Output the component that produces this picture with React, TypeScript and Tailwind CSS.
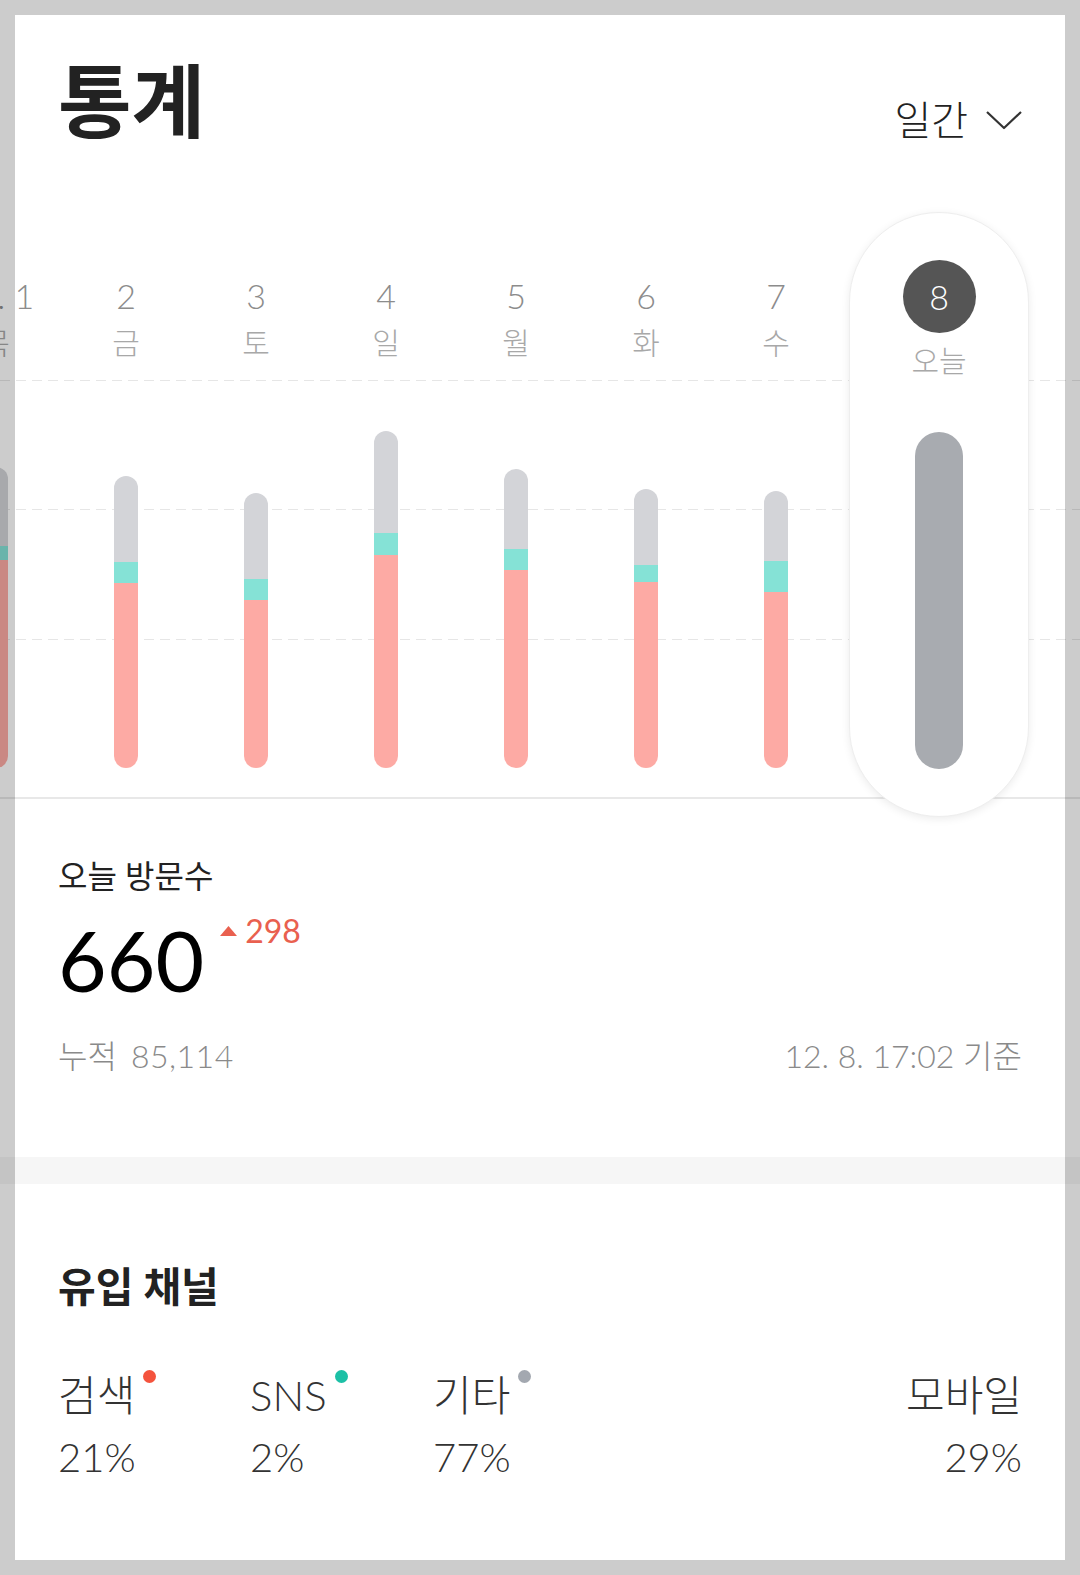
import React from 'react';

const days = [
  { d: '12. 1', w: '목', gray: 79, teal: 14, red: 208 },
  { d: '2', w: '금', gray: 86, teal: 21, red: 185 },
  { d: '3', w: '토', gray: 86, teal: 21, red: 168 },
  { d: '4', w: '일', gray: 102, teal: 22, red: 213 },
  { d: '5', w: '월', gray: 80, teal: 21, red: 198 },
  { d: '6', w: '화', gray: 76, teal: 17, red: 186 },
  { d: '7', w: '수', gray: 70, teal: 31, red: 176 },
];

const channels = [
  { name: '검색', pct: '21%', dot: 'bg-[#f4533d]', w: 'w-[192px]' },
  { name: 'SNS', pct: '2%', dot: 'bg-[#1cc0a6]', w: 'w-[183px]' },
  { name: '기타', pct: '77%', dot: 'bg-[#a3a8b0]', w: 'w-[183px]' },
];

const Dashed = ({ top }: { top: string }) => (
  <div className={`absolute left-0 right-0 h-px ${top} bg-[repeating-linear-gradient(to_right,#e6e6e6_0_10px,transparent_10px_16px)]`} />
);

const App = () => {
  return (
    <div className="relative h-[1575px] w-full overflow-hidden bg-white font-['Lato','Noto_Sans_CJK_KR',sans-serif] text-[#222]">
      {/* Header */}
      <div className="flex items-start justify-between px-[58px] pt-[60px]">
        <h1 className="text-[80px] font-bold leading-[80px] text-[#222]">통계</h1>
        <div className="mt-[40px] flex h-[40px] items-center gap-[18px]">
          <span className="text-[40px] font-light leading-[40px] text-[#222]">일간</span>
          <svg width="36" height="20" viewBox="0 0 36 20" fill="none">
            <polyline points="1,2 18,18 35,2" stroke="#333" strokeWidth="2.2" strokeLinejoin="round" />
          </svg>
        </div>
      </div>

      {/* Chart */}
      <div className="relative mt-[72px] h-[587px] border-b-2 border-[#e8e8e8]">
        <Dashed top="top-[168px]" />
        <Dashed top="top-[297px]" />
        <Dashed top="top-[427px]" />

        <div className="relative ml-[-69px] flex items-start">
          {days.map((day) => (
            <div key={day.d} className="flex h-[585px] w-[130px] shrink-0 flex-col items-center">
              <span className="mt-[64px] whitespace-nowrap text-[34px] font-light leading-[40px] text-[#8c8c8c]">{day.d}</span>
              <span className="mt-[6px] text-[30px] font-light leading-[40px] text-[#a8a8a8]">{day.w}</span>
              <div className="flex flex-1 flex-col justify-end pb-[29px]">
                <div className="flex w-[24px] flex-col overflow-hidden rounded-full">
                  <div className="bg-[#d3d4d8]" style={{ height: day.gray }} />
                  <div className="bg-[#85e2d6]" style={{ height: day.teal }} />
                  <div className="bg-[#fdaaa4]" style={{ height: day.red }} />
                </div>
              </div>
            </div>
          ))}

          {/* Today */}
          <div className="relative z-10 ml-[8px] flex h-[605px] w-[180px] shrink-0 flex-col items-center rounded-full border border-[#eeeeee] bg-white shadow-[0_2px_8px_rgba(0,0,0,0.08)]">
            <div className="mt-[47px] flex h-[73px] w-[73px] items-center justify-center rounded-full bg-[#555555]">
              <span className="text-[34px] font-light leading-[40px] text-white">8</span>
            </div>
            <span className="mt-[7px] text-[30px] font-light leading-[40px] text-[#a8a8a8]">오늘</span>
            <div className="mt-[52px] h-[337px] w-[48px] rounded-full bg-[#a8abb0]" />
          </div>
        </div>
      </div>

      {/* Today visits */}
      <div className="px-[58px] pt-[57px] pb-[81px]">
        <p className="text-[32px] leading-[40px] text-[#222]">오늘 방문수</p>
        <div className="mt-[21px] flex items-start">
          <span className="text-[84px] leading-[86px] text-black">660</span>
          <span className="ml-[16px] mt-[-2px] flex items-center gap-[8px] text-[32px] leading-[32px] text-[#e9604f]">
            <svg width="17" height="10" viewBox="0 0 17 10">
              <polygon points="8.5,0 17,10 0,10" fill="#e9604f" />
            </svg>
            298
          </span>
        </div>
        <div className="mt-[33px] flex items-center justify-between text-[32px] font-light leading-[40px] text-[#8a8a8a]">
          <span className="flex gap-[14px]">
            <span>누적</span>
            <span className="tracking-[0.5px]">85,114</span>
          </span>
          <span>12. 8. 17:02 기준</span>
        </div>
      </div>

      <div className="h-[27px] bg-[#f6f6f6]" />

      {/* Channels */}
      <div className="px-[58px] pt-[80px]">
        <h2 className="text-[41px] font-bold leading-[46px] text-[#222]">유입 채널</h2>
        <div className="mt-[60px] flex">
          {channels.map((c) => (
            <div key={c.name} className={`${c.w} flex flex-col`}>
              <div className="flex items-start">
                <span className="text-[42px] font-light leading-[50px] text-[#333]">{c.name}</span>
                <span className={`ml-[8px] h-[13px] w-[13px] rounded-full ${c.dot}`} />
              </div>
              <span className="mt-[12px] text-[40px] font-light leading-[50px] text-[#333]">{c.pct}</span>
            </div>
          ))}
          <div className="ml-auto flex flex-col items-end">
            <span className="text-[42px] font-light leading-[50px] text-[#333]">모바일</span>
            <span className="mt-[12px] text-[40px] font-light leading-[50px] text-[#333]">29%</span>
          </div>
        </div>
      </div>

      {/* Frame overlay */}
      <div className="pointer-events-none absolute inset-0 z-20 border-[15px] border-black/20" />
    </div>
  );
};

export default App;
